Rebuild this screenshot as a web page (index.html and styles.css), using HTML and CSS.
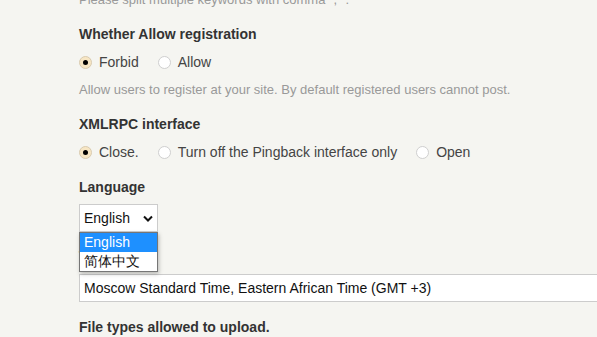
FILE: index.html
```html
<!DOCTYPE html>
<html lang="en">
<head>
  <meta charset="UTF-8">
  <title>Settings</title>
  <link rel="stylesheet" href="styles.css">
</head>
<body>
<div class="main">
  <p class="hint hint-top">Please split multiple keywords with comma "," .</p>

  <div class="field">
    <div class="title">Whether Allow registration</div>
    <div class="options">
      <label class="option"><span class="radio checked"></span>Forbid</label>
      <label class="option"><span class="radio"></span>Allow</label>
    </div>
    <p class="hint">Allow users to register at your site. By default registered users cannot post.</p>
  </div>

  <div class="field">
    <div class="title">XMLRPC interface</div>
    <div class="options">
      <label class="option"><span class="radio checked"></span>Close.</label>
      <label class="option"><span class="radio"></span>Turn off the Pingback interface only</label>
      <label class="option"><span class="radio"></span>Open</label>
    </div>
  </div>

  <div class="field field-lang">
    <div class="title">Language</div>
    <div class="select-wrap">
      <div class="select">English
        <svg class="arrow" width="10" height="7" viewBox="0 0 10 7"><path d="M1 1.5 L5 5.5 L9 1.5" fill="none" stroke="#111" stroke-width="2"/></svg>
      </div>
      <ul class="dropdown">
        <li class="active">English</li>
        <li>简体中文</li>
      </ul>
    </div>
  </div>

  <div class="field">
    <div class="title">Time zone</div>
    <div class="input">Moscow Standard Time, Eastern African Time (GMT +3)</div>
  </div>

  <div class="field field-last">
    <div class="title">File types allowed to upload.</div>
  </div>
</div>
</body>
</html>
```

FILE: styles.css
```css
body{
  margin: 0;
  padding: 0;
  background: #f5f5f1;
  font-family: "Liberation Sans", Arial, sans-serif;
  font-size: 13px;
  color: #444;
  overflow: hidden;
}

.main{
  padding-left: 79px;
  margin-top: -10px;
}

.hint{
  margin: 8px 0 0 0;
  line-height: 20px;
  color: #999;
}

.hint-top{
  margin: 0;
}

.field{
  margin-top: 14px;
}

.field-lang{
  margin-top: 15px;
}

.field-last{
  margin-top: 15px;
}

.title{
  line-height: 20px;
  font-size: 14px;
  font-weight: bold;
  color: #333;
}

.options{
  display: flex;
  gap: 19px;
  margin-top: 8px;
  line-height: 20px;
  font-size: 14px;
}

.option{
  display: flex;
  align-items: center;
  gap: 7px;
  color: #444;
}

.radio{
  width: 11px;
  height: 11px;
  border-radius: 50%;
  border: 1px solid #cfcfcf;
  background: #fff;
  display: flex;
  align-items: center;
  justify-content: center;
}

.radio.checked{
  background: #f7e6c4;
  border-color: #d9cbb0;
}

.radio.checked::after{
  content: "";
  width: 5px;
  height: 5px;
  border-radius: 50%;
  background: #000;
}

.select-wrap{
  position: relative;
  margin-top: 7px;
  width: 79px;
}

.select{
  box-sizing: border-box;
  width: 79px;
  height: 28px;
  border: 1px solid #ccc;
  background: #fff;
  padding: 0 4px;
  display: flex;
  align-items: center;
  justify-content: space-between;
  font-size: 14px;
  color: #111;
}

.dropdown{
  position: absolute;
  top: 28px;
  left: 0;
  box-sizing: border-box;
  width: 79px;
  margin: 0;
  padding: 0;
  list-style: none;
  background: #fff;
  border: 1px solid #767676;
  box-shadow: 1px 2px 4px rgba(0, 0, 0, 0.25);
  font-size: 14px;
  color: #111;
  z-index: 2;
}

.dropdown li{
  height: 19px;
  line-height: 19px;
  padding: 0 4px;
}

.dropdown li.active{
  background: #1e90ff;
  color: #fff;
}

.input{
  box-sizing: border-box;
  width: 700px;
  height: 28px;
  margin-top: 8px;
  border: 1px solid #ccc;
  background: #fff;
  padding: 0 4px;
  display: flex;
  align-items: center;
  font-size: 14px;
  color: #111;
}
```
